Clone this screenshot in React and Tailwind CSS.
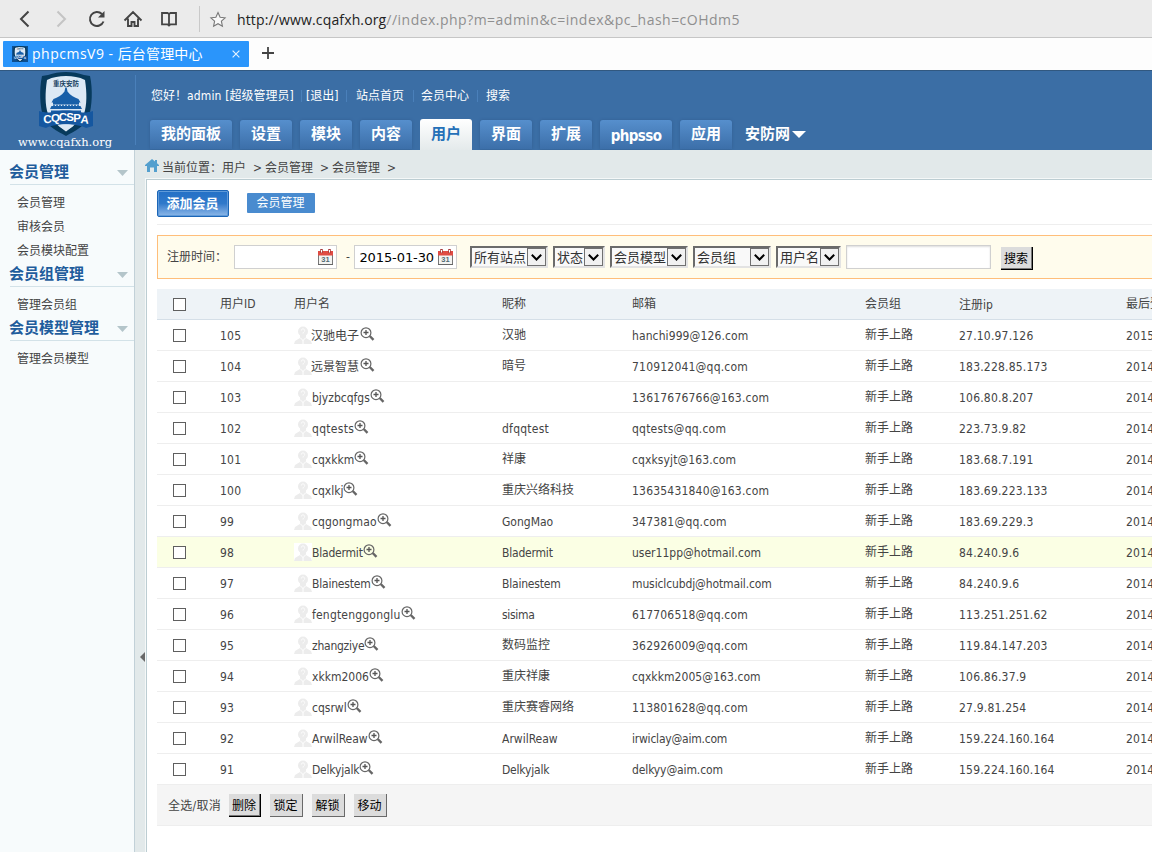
const rows = [
  ['105', '汉驰电子', '汉驰', 'hanchi999@126.com', '27.10.97.126', '2015'],
  ['104', '远景智慧', '暗号', '710912041@qq.com', '183.228.85.173', '2014'],
  ['103', 'bjyzbcqfgs', '', '13617676766@163.com', '106.80.8.207', '2014'],
  ['102', 'qqtests', 'dfqqtest', 'qqtests@qq.com', '223.73.9.82', '2014'],
  ['101', 'cqxkkm', '祥康', 'cqxksyjt@163.com', '183.68.7.191', '2014'],
  ['100', 'cqxlkj', '重庆兴络科技', '13635431840@163.com', '183.69.223.133', '2014'],
  ['99', 'cqgongmao', 'GongMao', '347381@qq.com', '183.69.229.3', '2014'],
  ['98', 'Bladermit', 'Bladermit', 'user11pp@hotmail.com', '84.240.9.6', '2014'],
  ['97', 'Blainestem', 'Blainestem', 'musiclcubdj@hotmail.com', '84.240.9.6', '2014'],
  ['96', 'fengtenggonglu', 'sisima', '617706518@qq.com', '113.251.251.62', '2014'],
  ['95', 'zhangziye', '数码监控', '362926009@qq.com', '119.84.147.203', '2014'],
  ['94', 'xkkm2006', '重庆祥康', 'cqxkkm2005@163.com', '106.86.37.9', '2014'],
  ['93', 'cqsrwl', '重庆赛睿网络', '113801628@qq.com', '27.9.81.254', '2014'],
  ['92', 'ArwilReaw', 'ArwilReaw', 'irwiclay@aim.com', '159.224.160.164', '2014'],
  ['91', 'Delkyjalk', 'Delkyjalk', 'delkyy@aim.com', '159.224.160.164', '2014'],
];

const tracking = {
  qqtests: 'tracking-[0.3px]',
  dfqqtest: 'tracking-[0.25px]',
  cqgongmao: 'tracking-[0.1px]',
  Bladermit: 'tracking-[-0.2px]',
  Blainestem: 'tracking-[-0.2px]',
  Delkyjalk: 'tracking-[-0.2px]',
  zhangziye: 'tracking-[-0.25px]',
  fengtenggonglu: 'tracking-[0.2px]',
  sisima: 'tracking-[-0.3px]',
  'qqtests@qq.com': 'tracking-[0.22px]',
  'hanchi999@126.com': 'tracking-[0.1px]',
  'cqxksyjt@163.com': 'tracking-[0.1px]',
  'cqxkkm2005@163.com': 'tracking-[0.06px]',
  'musiclcubdj@hotmail.com': 'tracking-[-0.12px]',
  'user11pp@hotmail.com': 'tracking-[0px]',
  'irwiclay@aim.com': 'tracking-[-0.22px]',
  'delkyy@aim.com': 'tracking-[-0.12px]',
};

const trackingOf = (s) => tracking[s] || (/^\d/.test(s) ? 'tracking-[0.2px]' : '');

const grid = 'grid grid-cols-[63px_74px_208px_130px_233px_94px_167px_60px]';

function BrowserBar() {
  return (
    <div className="flex h-[38px] shrink-0 items-center border-b border-[#c6c6c6] bg-[#ebebeb] font-['Open_Sans','Noto_Sans',sans-serif]">
      <svg className="h-[37px] w-[230px] shrink-0" viewBox="0 0 230 37" fill="none" stroke="#444" strokeWidth="2">
        <path d="M28.500 11.500 21 19l7.500 7.500" />
        <path d="M57.500 11.500 65 19l-7.500 7.500" stroke="#c4c4c4" />
        <path d="M103.500 21.500a7 7 0 1 1-1.600-7.500" />
        <path d="M104.500 11v6.500H98z" fill="#444" stroke="none" />
        <path d="M124.500 20.500 133 12l8.500 8.500M128 18.500V26h3.500v-4h3v4h3.500v-7.500" strokeWidth="1.900" />
        <path d="M169 14V25.500M162 13h5.500l1.500 1 1.500-1H176V24.300h-5.500L169 25.500l-1.500-1.200H162z" strokeWidth="1.800" />
        <path d="M199.500 6v26" stroke="#c9c9c9" strokeWidth="1" />
        <path d="M218 12.500l2.100 4.700 5 .6-3.700 3.400 1 5-4.400-2.500-4.400 2.500 1-5-3.700-3.400 5-.6z" stroke="#777" strokeWidth="1.100" fill="#f8f8f8" />
      </svg>
      <div className="ml-[7px] pt-[3px] text-[14px] leading-[20px] text-[#222]">
        <span className="tracking-[0.14px]">http://www.cqafxh.org</span><span className="tracking-[0.480px] text-[#8f8f8f]">//index.php?m=admin&amp;c=index&amp;pc_hash=cOHdm5</span>
      </div>
    </div>
  );
}

function Crest({ className }) {
  return (
    <svg className={className} viewBox="0 0 54 64" preserveAspectRatio="none">
      <path d="M27 0c7 0 12 1 18 3l6 1c3 14 2 29-1 41-4 9-14 14-23 19C18 59 8 54 4 45 1 33 0 18 3 4l6-1c6-2 11-3 18-3z" fill="#073a5c" />
      <path d="M27 4c7 0 13 1 19 4 2 13 2 25-1 34-3 7-11 12-18 17C20 54 12 49 9 42 6 33 6 21 8 8c6-3 12-4 19-4z" fill="#dce9f5" />
      <text x="27" y="13.500" textAnchor="middle" fontSize="6.500" fontWeight="bold" fill="#173f60" fontFamily="Noto Sans CJK SC, sans-serif">重庆安防</text>
      <path d="M26.300 15.500h1.400l.8 4c3 4 7 6 11 7.500l2 3.500H12.500l2-3.500c4-1.500 8-3.500 11-7.500zM14 30h26v2.500H14z" fill="#185fa8" />
      <path d="M12.500 34h29l1.500 3H11zM12 38.500h30V42H12z" fill="#185fa8" />
      <path d="M14 33.300h26" stroke="#185fa8" strokeDasharray="2 1" />
      <path d="M0 39c5 1.500 9 2 13 1 9-2 19-2 28 0 4 1 8 .5 13-1v15l-7 2c-10-5-30-5-40 0l-7-2z" fill="#1557a0" />
      <g fontSize="11.500" fontWeight="bold" fill="#fff" textAnchor="middle" fontFamily="Liberation Sans, sans-serif">
        <text x="9" y="51" transform="rotate(-6 9 51)">C</text>
        <text x="16.500" y="50">Q</text>
        <text x="24" y="49">C</text>
        <text x="31" y="49">S</text>
        <text x="38" y="50">P</text>
        <text x="45.500" y="51.500" transform="rotate(6 45 51)">A</text>
      </g>
      <path d="M19 53.500c5-1.500 11-1.500 16 0l-8 6z" fill="#dce9f5" />
    </svg>
  );
}

function BrowserTabs() {
  return (
    <div className="flex h-[32px] shrink-0 bg-[#fdfdfd] pt-[3px] pl-[3px]">
      <div className="flex h-[26px] w-[246px] items-center rounded-[1px] bg-[#2a95fb] pl-[9px] text-white">
        <div className="flex h-4 w-4 items-center justify-center bg-[#0d4f8f]">
          <Crest className="h-4 w-3.5" />
        </div>
        <span className="ml-1 w-[186px] whitespace-nowrap font-['Open_Sans','Noto_Sans_CJK_SC',sans-serif] text-[14px] leading-[24px]"><span className="tracking-[0.500px]">phpcmsV9 - </span><span className="tracking-[0.150px]">后台管理中心</span></span>
        <svg className="ml-[14px] h-[8px] w-[8px]" viewBox="0 0 9 9" stroke="#e6f2ff" strokeWidth="1.300"><path d="M.7.7l7.600 7.600M8.300.7.700 8.300" /></svg>
      </div>
      <svg className="mt-1.5 ml-[13px] h-3 w-3" viewBox="0 0 12 12" stroke="#444" strokeWidth="1.800"><path d="M6 0v12M0 6h12" /></svg>
    </div>
  );
}

function NavTab({ label, width, active }) {
  if (active)
    return <div className="mr-2 h-[31px] w-[52px] rounded-t-[3px] bg-linear-to-b from-white to-[#e4eaeb] text-center text-[15px] leading-[31px] font-bold text-[#2470b8]">{label}</div>;
  return (
    <div className={`mr-2 mt-px h-[29px] rounded-t-[3px] bg-linear-to-b from-[#568fcd] to-[#3c6fa9] text-center text-[15px] font-bold shadow-[0_0_3px_#325f93] ${label === 'phpsso' ? 'leading-[32px] tracking-[-0.6px]' : 'leading-[29px]'} ${width}`}>{label}</div>
  );
}

function Header() {
  return (
    <header className="flex h-[80px] shrink-0 overflow-hidden border-t border-[#315880] bg-[#3b6ea5] text-white">
      <div className="flex w-[130px] shrink-0 flex-col items-center pt-px">
        <Crest className="ml-[2px] h-[64px] w-[54px]" />
        <div className="-mt-px font-['DejaVu_Serif',serif] text-[11.500px] leading-[14px]">www.cqafxh.org</div>
      </div>
      <div className="ml-[5px] mt-1 h-[70px] w-px bg-[#4a80ba]" />
      <div className="ml-[14px] flex flex-col">
        <div className="flex h-[48px] items-start pt-[17px] pl-px text-[12px] leading-[16px] whitespace-nowrap">
          <span className="w-[147px]">您好！<span className="tracking-[0.150px]">admin [</span>超级管理员]</span>
          <span className="mx-[3px] h-3 w-px self-start mt-0.5 bg-[#4a80ba]" />
          <span className="ml-px w-[39px]">[退出]</span>
          <span className="mx-px mt-0.5 h-3 w-px bg-[#4a80ba]" />
          <span className="ml-2 w-[57px]">站点首页</span>
          <span className="mt-0.5 h-3 w-px bg-[#4a80ba]" />
          <span className="ml-[7px] w-[56px]">会员中心</span>
          <span className="mt-0.5 h-3 w-px bg-[#4a80ba]" />
          <span className="ml-[8px]">搜索</span>
        </div>
        <nav className="flex">
          <NavTab label="我的面板" width="w-[82px]" />
          <NavTab label="设置" width="w-[52px]" />
          <NavTab label="模块" width="w-[52px]" />
          <NavTab label="内容" width="w-[52px]" />
          <NavTab label="用户" active />
          <NavTab label="界面" width="w-[52px]" />
          <NavTab label="扩展" width="w-[52px]" />
          <NavTab label="phpsso" width="w-[72px]" />
          <NavTab label="应用" width="w-[52px]" />
          <div className="flex items-center pl-[5px] text-[15px] font-bold leading-[31px]">
            安防网
            <svg className="ml-[2px] h-[7px] w-3.5" viewBox="0 0 14 7" fill="#fff"><path d="M0 0h14L7 7z" /></svg>
          </div>
        </nav>
      </div>
    </header>
  );
}

function SideGroup({ title, items, className }) {
  return (
    <section className={className}>
      <div className="ml-2.5 flex h-[23px] items-center justify-between border-b border-[#d3e2e8] pr-[6px] text-[15px] leading-[20px] font-bold text-[#1f5d9c]">
        <span className="-mt-[3px] -ml-px">{title}</span>
        <svg className="h-1.5 w-[11px]" viewBox="0 0 11 6" fill="#b4c5ca"><path d="M0 0h11L5.500 6z" /></svg>
      </div>
      <ul className="pt-[6px] pl-[17px]">
        {items.map((item) => <li key={item} className="h-6 text-[12px] leading-[24px] text-[#444]">{item}</li>)}
      </ul>
    </section>
  );
}

function Sidebar() {
  return (
    <aside className="w-[135px] shrink-0 border-r border-[#c2d1d8] bg-[#f7fbfc] pt-[12px]">
      <SideGroup title="会员管理" items={['会员管理', '审核会员', '会员模块配置']} className="h-[102px]" />
      <SideGroup title="会员组管理" items={['管理会员组']} className="h-[54px]" />
      <SideGroup title="会员模型管理" items={['管理会员模型']} className="h-[54px]" />
    </aside>
  );
}

function Calendar() {
  return (
    <svg className="h-4 w-[15px]" viewBox="0 0 15 16">
      <path d="M.5 3.500h14v12H.5z" fill="#f4f4f2" stroke="#777" />
      <path d="M0 2h15v4.500H0z" fill="#e04c43" />
      <path d="M3.500 0v4M11.500 0v4" stroke="#a83a3a" strokeWidth="2.500" />
      <path d="M3.500 1v2.500M11.500 1v2.500" stroke="#fff" strokeWidth="1" />
      <text x="7.500" y="13" fontSize="7.500" fontWeight="bold" textAnchor="middle" fill="#526b74" fontFamily="Liberation Sans, sans-serif">31</text>
      <path d="M0 15.500h15" stroke="#666" />
    </svg>
  );
}

function DateBox({ value }) {
  return (
    <div className="flex h-6 w-[103px] items-center justify-end border border-[#d0d0d0] bg-white pr-[3px] font-['DejaVu_Sans',sans-serif] text-[13px] text-black">
      <span className="mt-0.5 mr-[4px] tracking-[-0.100px]">{value}</span>
      <Calendar />
    </div>
  );
}

function Select({ label, width }) {
  return (
    <div className={`mr-[5px] flex h-[22px] items-center border-2 border-t-[#6b6b6b] border-l-[#6b6b6b] border-r-[#e3e3e3] border-b-[#e3e3e3] bg-[#f9f9f9] text-[13px] text-[#333] ${width}`}>
      <span className="mt-px flex-1 pl-[2px] leading-[16px] whitespace-nowrap">{label}</span>
      <span className="flex h-[18px] w-[19px] shrink-0 items-center justify-center border border-[#707070] bg-[#f1f1f1]">
        <svg className="h-[7px] w-[11px]" viewBox="0 0 11 7" fill="none" stroke="#000" strokeWidth="2"><path d="M.8.8 5.500 5.500 10.200.800" /></svg>
      </span>
    </div>
  );
}

function Btn({ label, strong }) {
  return (
    <button className={strong
      ? 'h-[23px] w-8 border-r border-b border-black bg-[#dcdcdc] pt-px pr-px text-[12px] leading-[22px] text-black shadow-[inset_-1px_-1px_#777]'
      : 'h-[23px] w-[33px] border-r border-b border-[#696969] bg-[#dcdcdc] pt-px pr-px text-[12px] leading-[22px] text-black'}>{label}</button>
  );
}

function Check() {
  return <span className="ml-4 block h-[13px] w-[13px] border border-[#5f5f5f] bg-white" />;
}

function Avatar() {
  return (
    <svg className="h-[18px] w-[18px] shrink-0 bg-white" viewBox="0 0 18 18">
      <circle cx="9" cy="5.500" r="5" fill="#ececec" />
      <path d="M6 9h6v3l5 3 1 3H0l1-3 5-3z" fill="#ececec" />
      <path d="M7.300 4.500c0-2.200 3.400-2 3.400 0 0 1.500-1.700 1.300-1.700 3M6 11.500l3 3 3-3M9 14v4" stroke="#fff" fill="none" />
    </svg>
  );
}

function Magnifier() {
  return (
    <svg className="h-[14px] w-[15px] shrink-0" viewBox="0 0 15 14" fill="none">
      <circle cx="6" cy="5.700" r="4.900" stroke="#666" strokeWidth="1.200" />
      <path d="M3.500 5.500h5M6 3v5" stroke="#555" strokeWidth="1.300" />
      <path d="M9.700 9l3.800 3.800" stroke="#666" strokeWidth="2.400" />
    </svg>
  );
}

const hasCjk = (s) => /[\u4e00-\u9fff]/.test(s);

function Text({ children }) {
  return <span className={`${hasCjk(children) ? '' : 'pt-0.5'} ${trackingOf(children)}`}>{children}</span>;
}

function MemberTable() {
  return (
    <div className="mt-2.5 w-[1029px] text-[12px] whitespace-nowrap text-[#444]">
      <div className={`${grid} h-[31px] items-center border-b border-[#d5dfe8] bg-[#eef3f7]`}>
        <Check />
        <span>用户ID</span><span>用户名</span><span>昵称</span><span>邮箱</span><span>会员组</span><span className="pt-px">注册ip</span><span>最后登录</span>
      </div>
      {rows.map(([id, name, nick, mail, ip, last]) => (
        <div key={id} className={`${grid} h-[31px] items-center border-b border-[#eee] ${id === '98' ? 'bg-[#fbffe4]' : 'bg-white'}`}>
          <Check />
          <Text>{id}</Text>
          <span className="flex items-center">
            <Avatar />
            <span className={hasCjk(name) ? '-ml-px mr-px pt-0.5' : `pt-0.5 ${trackingOf(name)}`}>{name}</span>
            <span className="-mt-[2px]"><Magnifier /></span>
          </span>
          <Text>{nick}</Text>
          <Text>{mail}</Text>
          <Text>新手上路</Text>
          <Text>{ip}</Text>
          <Text>{last}</Text>
        </div>
      ))}
    </div>
  );
}

function Content() {
  return (
    <main className="flex min-w-0 flex-1 flex-col bg-[#e2e9ea]">
      <div className="flex h-[28px] shrink-0 items-start pt-[9px] pl-[10px] text-[12px] leading-[16px] text-[#444]">
        <svg className="h-[13px] w-[14px]" viewBox="0 0 14 13" fill="#539fce"><path d="M7 0l3 2.500V1h2v3.200L14 6v1h-2v6H9V8.500H5V13H2V7H0V6z" /></svg>
        <div className="flex pt-px">
          <span className="ml-[3px] w-[84px]">当前位置：用户</span>
          <span className="ml-[7px] w-2">&gt;</span>
          <span className="ml-[4px] w-[48px]">会员管理</span>
          <span className="ml-[7px] w-2">&gt;</span>
          <span className="ml-[4px] w-[48px]">会员管理</span>
          <span className="ml-[7px]">&gt;</span>
        </div>
      </div>
      <div className="flex min-h-0 flex-1">
        <div className="flex w-[10px] shrink-0 items-center pt-[283px] pl-[5px]">
          <svg className="h-2.5 w-[5px] shrink-0" viewBox="0 0 5 10" fill="#696969"><path d="M5 0v10L0 5z" /></svg>
        </div>
        <div className="flex-1 overflow-hidden border-t border-l border-[#f5f8f8]">
          <div className="h-full border-t border-l border-[#bccdd2] bg-white pl-2.5">
            <div className="flex h-[45px] border-b border-[#eee] pt-[10px]">
              <div className="h-[27px] w-[72px] rounded-[2px] border border-[#1c66b7] bg-linear-to-b from-[#2370c6] via-[#3079ca] to-[#8db8e8] pr-px text-center text-[13px] leading-[25px] font-bold text-white shadow-[inset_0_0_0_1px_#5f9ad9]">添加会员</div>
              <div className="mt-[3px] ml-[18px] h-5 w-[68px] rounded-[1px] bg-[#498bcf] pr-px text-center text-[12px] leading-[21px] text-white">会员管理</div>
            </div>
            <div className="mt-2.5 flex h-11 w-[1000px] items-center border border-r-0 border-[#ffbe7a] bg-[#fffced] pl-[9px] text-[12px] text-[#444]">
              <span className="w-[67px]">注册时间：</span>
              <DateBox value="" />
              <span className="w-[17px] pl-[9px]">-</span>
              <DateBox value="2015-01-30" />
              <div className="ml-[13px] flex">
                <Select label="所有站点" width="w-[78px]" />
                <Select label="状态" width="w-[52px]" />
                <Select label="会员模型" width="w-[78px]" />
                <Select label="会员组" width="w-[78px]" />
                <Select label="用户名" width="w-[65px]" />
              </div>
              <div className="mr-2.5 h-6 w-[145px] border border-[#d0d0d0] bg-white shadow-[inset_0_1px_2px_#ddd]" />
              <div className="pt-0.5"><Btn label="搜索" strong /></div>
            </div>
            <MemberTable />
            <div className="flex h-[41px] items-center gap-[9px] border-b border-[#eee] bg-[#f5f5f5] pl-[11px] text-[12px] text-[#444]">
              <span className="-mr-[2px] w-[54px] pt-0.5 tracking-[0.3px] whitespace-nowrap">全选/取消</span>
              <Btn label="删除" strong />
              <Btn label="锁定" />
              <Btn label="解锁" />
              <Btn label="移动" />
            </div>
          </div>
        </div>
      </div>
    </main>
  );
}

export default function App() {
  return (
    <div className="flex h-[852px] w-[1152px] flex-col overflow-hidden bg-white font-['DejaVu_Sans_Condensed','Noto_Sans_CJK_SC',sans-serif]">
      <BrowserBar />
      <BrowserTabs />
      <Header />
      <div className="flex min-h-0 flex-1">
        <Sidebar />
        <Content />
      </div>
    </div>
  );
}
